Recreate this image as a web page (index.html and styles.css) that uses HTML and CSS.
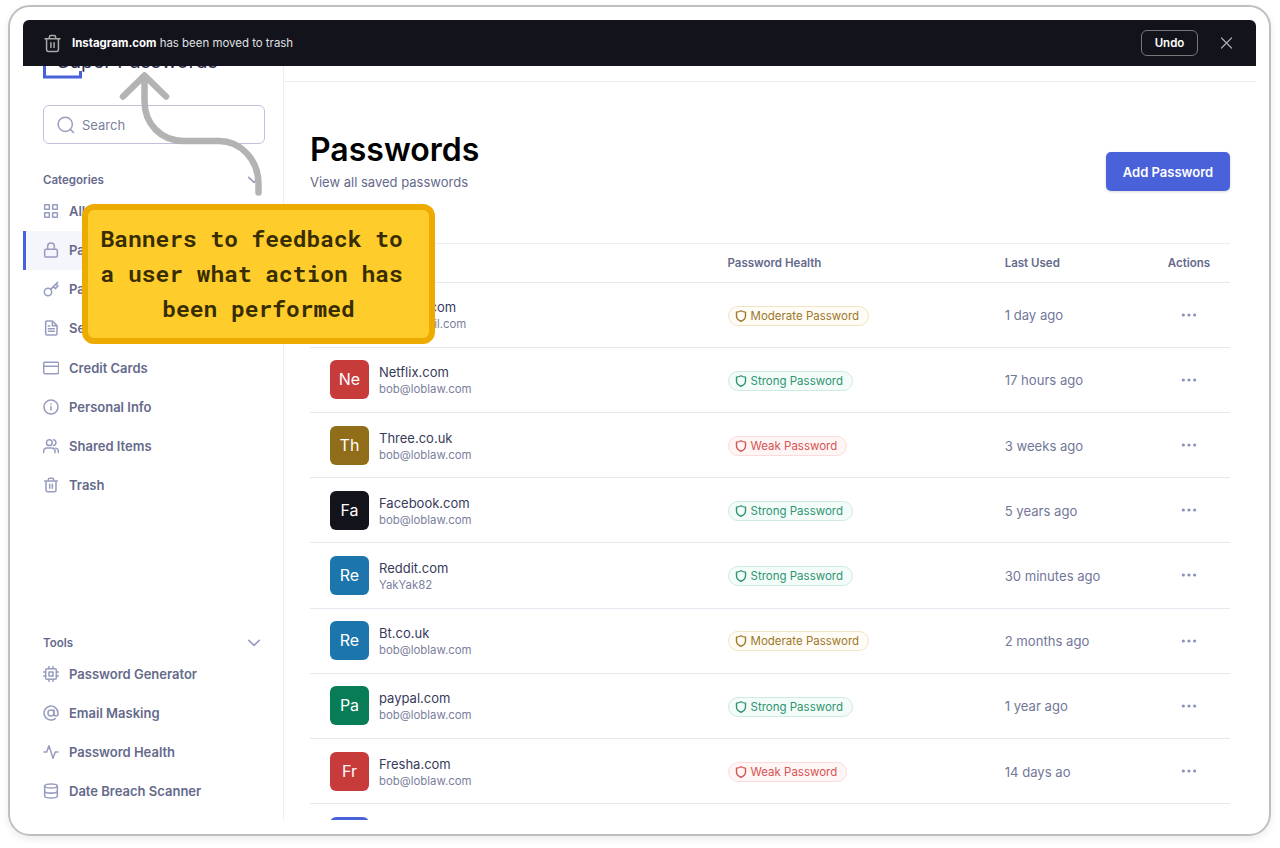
FILE: index.html
```
<!DOCTYPE html>
<html lang="en">
<head>
<meta charset="utf-8">
<title>Super Passwords</title>
<link rel="stylesheet" href="styles.css">
</head>
<body>
<svg class="defs" width="0" height="0">
  <symbol id="trash" viewBox="0 0 24 24"><path d="M2.500 6h19M4.500 6v14a2 2 0 0 0 2 2h11a2 2 0 0 0 2-2V6M8 6V4a2 2 0 0 1 2-2h4a2 2 0 0 1 2 2v2M10 11v6M14 11v6"/></symbol>
  <symbol id="close" viewBox="0 0 24 24"><path d="M4 4l16 16M20 4L4 20"/></symbol>
  <symbol id="search" viewBox="0 0 24 24"><circle cx="11" cy="11" r="9.500"/><path d="M22 22l-4-4"/></symbol>
  <symbol id="chevron" viewBox="0 0 24 24"><path d="M3 7.500l9 8.500 9-8.500"/></symbol>
  <symbol id="grid" viewBox="0 0 24 24"><path d="M2.500 2.500h7v7h-7zM14.500 2.500h7v7h-7zM2.500 14.500h7v7h-7zM14.500 14.500h7v7h-7z"/></symbol>
  <symbol id="lock" viewBox="0 0 24 24"><rect x="2.500" y="11" width="19" height="11.500" rx="2"/><path d="M7 11V6.500a5 5 0 0 1 10 0V11"/></symbol>
  <symbol id="key" viewBox="0 0 24 24"><circle cx="7.500" cy="16.500" r="5.500"/><path d="M11.500 12.500L22 2M15.500 8.500l3 3 4-4-3-3"/></symbol>
  <symbol id="file" viewBox="0 0 24 24"><path d="M14 1.500H6a2 2 0 0 0-2 2v17a2 2 0 0 0 2 2h13a2 2 0 0 0 2-2V8.500zM14 1.500v7h7M8 9h2M8 13h9M8 17h9"/></symbol>
  <symbol id="card" viewBox="0 0 24 24"><rect x="1" y="3.500" width="22.500" height="17" rx="2"/><path d="M1 9.500h22.500"/></symbol>
  <symbol id="info" viewBox="0 0 24 24"><circle cx="12" cy="12" r="10.500"/><path d="M12 11.500v5M12 7.500v.5"/></symbol>
  <symbol id="users" viewBox="0 0 24 24"><circle cx="9.500" cy="7" r="4.300"/><path d="M1 22v-2a5 5 0 0 1 5-5h7a5 5 0 0 1 5 5v2M23 22v-2a5 5 0 0 0-3.700-4.800M16 2.800a4.300 4.300 0 0 1 0 8.400"/></symbol>
  <symbol id="cpu" viewBox="0 0 24 24"><rect x="4" y="4" width="16" height="16" rx="2"/><path d="M9 9h6v6H9zM9 1v3M15 1v3M9 20v3M15 20v3M20 9h3M20 15h3M1 9h3M1 15h3"/></symbol>
  <symbol id="at" viewBox="0 0 24 24"><circle cx="12" cy="12" r="4.500"/><path d="M16.500 7.500v6a3 3 0 0 0 6 0V12a10.500 10.500 0 1 0-4.200 8.400"/></symbol>
  <symbol id="pulse" viewBox="0 0 24 24"><path d="M22.500 12h-4l-3.500 9.500L9 2.500 5.500 12h-4"/></symbol>
  <symbol id="db" viewBox="0 0 24 24"><ellipse cx="12" cy="4.500" rx="9.500" ry="3"/><path d="M21.500 12c0 1.700-4.200 3.200-9.500 3.200S2.500 13.700 2.500 12M2.500 4.500v15c0 1.700 4.200 3 9.500 3s9.500-1.300 9.500-3v-15"/></symbol>
  <symbol id="shield" viewBox="0 0 24 24"><path d="M12 1.500c3 1.800 6 2.700 9 2.700V12c0 5-4 8.500-9 10.500C7 20.500 3 17 3 12V4.200c3 0 6-.9 9-2.700z"/></symbol>
  <symbol id="dots" viewBox="0 0 24 8"><circle cx="3.500" cy="4" r="2.400"/><circle cx="12" cy="4" r="2.400"/><circle cx="20.500" cy="4" r="2.400"/></symbol>
</svg>

<div class="frame">
  <div class="app">
    <aside class="sidebar">
      <div class="brand">
        <svg class="brand-mark" viewBox="0 0 40 40"><path d="M29 1.500H1.500v36.500h36V32"/></svg>
        <span class="brand-name">Super Passwords</span>
      </div>
      <div class="search"><svg class="icon"><use href="#search"/></svg><span>Search</span></div>
      <div class="group-head categories"><span>Categories</span><svg class="icon"><use href="#chevron"/></svg></div>
      <nav class="nav">
        <a class="nav-item"><svg class="icon"><use href="#grid"/></svg>All</a>
        <a class="nav-item active"><svg class="icon"><use href="#lock"/></svg>Pass</a>
        <a class="nav-item"><svg class="icon"><use href="#key"/></svg>Pass</a>
        <a class="nav-item"><svg class="icon"><use href="#file"/></svg>Sec</a>
        <a class="nav-item"><svg class="icon"><use href="#card"/></svg>Credit Cards</a>
        <a class="nav-item"><svg class="icon"><use href="#info"/></svg>Personal Info</a>
        <a class="nav-item"><svg class="icon"><use href="#users"/></svg>Shared Items</a>
        <a class="nav-item"><svg class="icon"><use href="#trash"/></svg>Trash</a>
      </nav>
      <div class="group-head tools"><span>Tools</span><svg class="icon"><use href="#chevron"/></svg></div>
      <nav class="nav">
        <a class="nav-item"><svg class="icon"><use href="#cpu"/></svg>Password Generator</a>
        <a class="nav-item"><svg class="icon"><use href="#at"/></svg>Email Masking</a>
        <a class="nav-item"><svg class="icon"><use href="#pulse"/></svg>Password Health</a>
        <a class="nav-item"><svg class="icon"><use href="#db"/></svg>Date Breach Scanner</a>
      </nav>
    </aside>

    <main class="main">
      <div class="topbar"></div>
      <header class="page-head">
        <div>
          <h1 class="title">Passwords</h1>
          <p class="subtitle">View all saved passwords</p>
        </div>
        <button class="add">Add Password</button>
      </header>
      <section class="table">
        <div class="row head"><span></span><span>Password Health</span><span>Last Used</span><span class="actions">Actions</span></div>
        <div class="row">
          <div class="site"><span class="avatar black"></span><div><p class="site-name">Appleid.com</p><p class="login">bob@gmail.com</p></div></div>
          <div><span class="badge moderate"><svg class="icon"><use href="#shield"/></svg>Moderate Password</span></div>
          <span class="used">1 day ago</span><span class="actions"><svg class="dots"><use href="#dots"/></svg></span>
        </div>
        <div class="row">
          <div class="site"><span class="avatar red">Ne</span><div><p class="site-name">Netflix.com</p><p class="login">bob@loblaw.com</p></div></div>
          <div><span class="badge strong"><svg class="icon"><use href="#shield"/></svg>Strong Password</span></div>
          <span class="used">17 hours ago</span><span class="actions"><svg class="dots"><use href="#dots"/></svg></span>
        </div>
        <div class="row">
          <div class="site"><span class="avatar olive">Th</span><div><p class="site-name">Three.co.uk</p><p class="login">bob@loblaw.com</p></div></div>
          <div><span class="badge weak"><svg class="icon"><use href="#shield"/></svg>Weak Password</span></div>
          <span class="used">3 weeks ago</span><span class="actions"><svg class="dots"><use href="#dots"/></svg></span>
        </div>
        <div class="row">
          <div class="site"><span class="avatar black">Fa</span><div><p class="site-name">Facebook.com</p><p class="login">bob@loblaw.com</p></div></div>
          <div><span class="badge strong"><svg class="icon"><use href="#shield"/></svg>Strong Password</span></div>
          <span class="used">5 years ago</span><span class="actions"><svg class="dots"><use href="#dots"/></svg></span>
        </div>
        <div class="row">
          <div class="site"><span class="avatar blue">Re</span><div><p class="site-name">Reddit.com</p><p class="login">YakYak82</p></div></div>
          <div><span class="badge strong"><svg class="icon"><use href="#shield"/></svg>Strong Password</span></div>
          <span class="used">30 minutes ago</span><span class="actions"><svg class="dots"><use href="#dots"/></svg></span>
        </div>
        <div class="row">
          <div class="site"><span class="avatar blue">Re</span><div><p class="site-name">Bt.co.uk</p><p class="login">bob@loblaw.com</p></div></div>
          <div><span class="badge moderate"><svg class="icon"><use href="#shield"/></svg>Moderate Password</span></div>
          <span class="used">2 months ago</span><span class="actions"><svg class="dots"><use href="#dots"/></svg></span>
        </div>
        <div class="row">
          <div class="site"><span class="avatar green">Pa</span><div><p class="site-name">paypal.com</p><p class="login">bob@loblaw.com</p></div></div>
          <div><span class="badge strong"><svg class="icon"><use href="#shield"/></svg>Strong Password</span></div>
          <span class="used">1 year ago</span><span class="actions"><svg class="dots"><use href="#dots"/></svg></span>
        </div>
        <div class="row">
          <div class="site"><span class="avatar red">Fr</span><div><p class="site-name">Fresha.com</p><p class="login">bob@loblaw.com</p></div></div>
          <div><span class="badge weak"><svg class="icon"><use href="#shield"/></svg>Weak Password</span></div>
          <span class="used">14 days ao</span><span class="actions"><svg class="dots"><use href="#dots"/></svg></span>
        </div>
        <div class="row last"><div class="site"><span class="avatar indigo"></span></div></div>
      </section>
    </main>

    <div class="banner">
      <svg class="icon"><use href="#trash"/></svg>
      <p class="message"><b>Instagram.com</b> has been moved to trash</p>
      <button class="undo">Undo</button>
      <svg class="icon close"><use href="#close"/></svg>
    </div>
  </div>
</div>

<svg class="arrow" viewBox="0 0 150 130"><path d="M148.500 121.500V113C148.500 88 130 70 109 70H74C51 70 34.500 53 34.500 30V5M13 25.500L34.500 4.500 56 25.500"/></svg>
<div class="note">Banners to feedback to&nbsp;<br>a user what action has&nbsp;<br>been performed</div>
</body>
</html>
```
FILE: styles.css
```
* { box-sizing: border-box; }

body {
  margin: 0;
  width: 1280px;
  height: 848px;
  padding: 5px 9px 0 8px;
  overflow: hidden;
  background: #fff;
  font-family: Inter, "Liberation Sans", sans-serif;
  color: #656a8b;
}

p, h1 { margin: 0; }
button { font-family: inherit; padding: 0; }
.defs { position: absolute; }

.icon {
  flex: none;
  width: 16px;
  height: 16px;
  fill: none;
  stroke: #989dbf;
  stroke-width: 2.300;
  stroke-linecap: round;
  stroke-linejoin: round;
}

.frame {
  height: 831px;
  padding: 13px 13px;
  border: 2px solid #bfbfbf;
  border-radius: 22px;
  box-shadow: 0 3px 8px rgba(0, 0, 0, .08);
}

.app {
  position: relative;
  display: flex;
  height: 800px;
  overflow: hidden;
  border-radius: 6px 6px 0 0;
}

/* Sidebar */
.sidebar {
  display: flex;
  flex-direction: column;
  flex: none;
  width: 261px;
  padding-top: 19px;
  border-right: 1px solid #ededf5;
}

.brand {
  display: flex;
  align-items: center;
  height: 40px;
  margin-left: 20px;
}
.brand-mark {
  flex: none;
  width: 40px;
  height: 40px;
  fill: none;
  stroke: #4a62d9;
  stroke-width: 3;
}
.brand-name {
  margin-left: -26px;
  padding-top: 4px;
  font-size: 19.500px;
  font-weight: 400;
  color: #2d3050;
}

.search {
  display: flex;
  align-items: center;
  gap: 7px;
  width: 222px;
  height: 39px;
  margin: 26px 0 0 20px;
  padding-left: 13px;
  border: 1px solid #bfc2da;
  border-radius: 6px;
  font-size: 13px;
  color: #7a7f9e;
}
.search .icon { width: 18px; height: 18px; stroke-width: 2; }

.group-head {
  display: flex;
  align-items: center;
  justify-content: space-between;
  height: 20px;
  margin: 26px 22px 0 20px;
  font-size: 11.500px;
  font-weight: 600;
}
.group-head .icon { width: 14px; height: 14px; stroke-width: 2.600; }
.tools { margin-top: 128.500px; }

.nav { margin-top: 1.500px; }
.nav-item {
  display: flex;
  align-items: center;
  gap: 10px;
  height: 39.130px;
  padding-left: 20px;
  font-size: 13px;
  font-weight: 600;
}
.nav-item.active {
  padding-left: 17px;
  border-left: 3px solid #4a62d9;
  background: #f5f6fb;
}

/* Main column */
.main { flex: 1; }
.topbar { height: 62px; border-bottom: 1px solid #ededf3; }

.page-head {
  display: flex;
  justify-content: space-between;
  align-items: center;
  height: 161px;
  padding: 0 26px 6px 26px;
}
.title {
  padding-top: 1px;
  font-size: 32px;
  line-height: 40px;
  font-weight: 600;
  color: #000;
}
.subtitle { margin-top: 3px; font-size: 13px; line-height: 18px; }
.add {
  width: 124px;
  height: 39px;
  margin-top: 24px;
  border: 0;
  border-radius: 5px;
  background: #4a62d9;
  box-shadow: 0 1px 3px rgba(0, 0, 0, .15);
  color: #fff;
  font-size: 13px;
  font-weight: 600;
}

.table { margin: 0 26px; border-top: 1px solid #ededf3; }
.row {
  display: grid;
  grid-template-columns: 417.500px 277.200px 143.300px 82px;
  align-items: center;
  height: 65.200px;
  border-bottom: 1px solid #e8e8f0;
}
.head { height: 38.600px; font-size: 11.500px; font-weight: 600; }
.last { border: 0; }
.actions { text-align: center; }

.site { display: flex; align-items: center; gap: 10px; padding-left: 20px; }
.avatar {
  width: 39px;
  height: 39px;
  border-radius: 6px;
  color: #fff;
  font-size: 16px;
  line-height: 39px;
  text-align: center;
}
.red { background: #c73b3b; }
.olive { background: #8f6d19; }
.black { background: #12131b; }
.blue { background: #1c75ab; }
.green { background: #087b57; }
.indigo { background: #4a62d9; }
.site-name { padding-top: 2px; font-size: 13px; line-height: 18px; color: #373b5b; }
.login { font-size: 11.400px; line-height: 17px; color: #7b809d; }
.used { padding-top: 1px; font-size: 13.100px; color: #72779a; }

.badge {
  display: inline-flex;
  align-items: center;
  gap: 4px;
  height: 20px;
  padding: 0 9px 0 6px;
  border: 1px solid;
  border-radius: 10px;
  font-size: 11.500px;
  vertical-align: middle;
}
.badge .icon { width: 12px; height: 12px; stroke: currentColor; stroke-width: 2.800; }
.moderate { color: #9d772b; background: #fffcf5; border-color: #f0e4c6; }
.strong { color: #2f9470; background: #f3fcf9; border-color: #cdebe0; }
.weak { color: #d65353; background: #fff5f5; border-color: #fbdcdc; }
.dots { display: block; width: 16px; height: 8px; margin: 0 auto; fill: #8c92b6; }

/* Banner laid over the top of the app */
.banner {
  position: absolute;
  inset: 0 0 auto 0;
  display: flex;
  align-items: center;
  height: 46px;
  padding: 0 22px 0 20px;
  background: #12131b;
  color: #e1e1e5;
}
.banner .icon { width: 19px; height: 19px; stroke: #aaa; stroke-width: 1.900; }
.message { flex: 1; margin-left: 10px; font-size: 11.450px; }
.message b { color: #fff; }
.undo {
  width: 57px;
  height: 26px;
  margin-right: 21px;
  border: 1px solid #777;
  border-radius: 6px;
  background: none;
  color: #fff;
  font-size: 11.500px;
  font-weight: 600;
}
.banner .close { width: 15px; height: 16px; stroke-width: 2; }

/* Annotation laid over the app */
.arrow {
  position: absolute;
  left: 110px;
  top: 71px;
  width: 150px;
  height: 130px;
  overflow: visible;
  fill: none;
  stroke: #b3b3b3;
  stroke-width: 6.500;
  stroke-linecap: round;
  stroke-linejoin: round;
}
.note {
  position: absolute;
  left: 82px;
  top: 203.500px;
  width: 353px;
  height: 140px;
  padding-top: 11px;
  border: 6px solid #edab00;
  border-radius: 12px;
  background: #ffcd2b;
  color: #382d00;
  font: bold 22.900px/35px "Roboto Mono", "DejaVu Sans Mono", monospace;
  text-align: center;
  white-space: nowrap;
}
```
